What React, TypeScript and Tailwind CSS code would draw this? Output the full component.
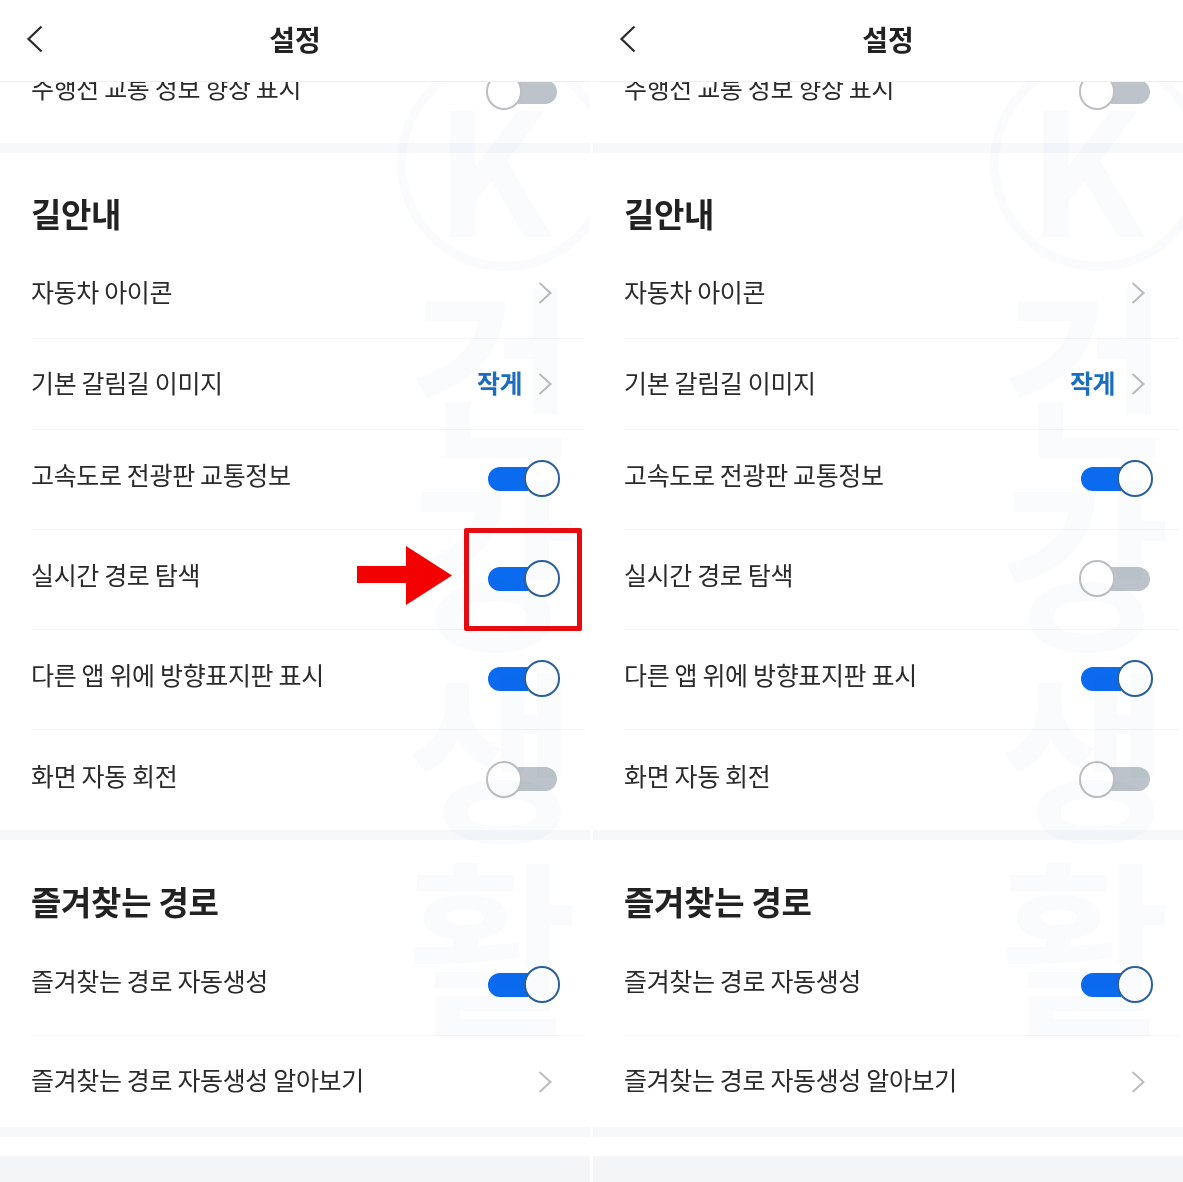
const FONT = "font-['Noto_Sans_CJK_KR','Noto_Sans',sans-serif]";

function Chevron() {
  return (
    <svg width="14" height="22" viewBox="0 0 14 22" fill="none" className="shrink-0">
      <path d="M1.5 1 L12.5 11 L1.5 21" stroke="#bcbcbc" strokeWidth="2" />
    </svg>
  );
}

function Toggle({ on }: { on: boolean }) {
  if (on) {
    return (
      <div className="mb-0.5 -mr-px flex h-[37px] w-[72px] shrink-0 items-center">
        <div className="h-6 w-10 rounded-l-full bg-[#0a6bef]" />
        <div className="-ml-1 h-[37px] w-9 rounded-full border-2 border-[#2b609f] bg-white" />
      </div>
    );
  }
  return (
    <div className="mb-0.5 flex h-[37px] w-[71px] shrink-0 items-center">
      <div className="z-10 -ml-0.5 h-[37px] w-9 shrink-0 rounded-full border-2 border-[#bcbfc2] bg-white" />
      <div className="-ml-1 h-6 w-[39px] rounded-r-full bg-[#bdc3ca]" />
    </div>
  );
}

function Row({
  label,
  height,
  toggle,
  value,
  divider = true,
}: {
  label: string;
  height: string;
  toggle?: boolean;
  value?: string;
  divider?: boolean;
}) {
  const isToggle = toggle !== undefined;
  return (
    <div className={`ml-[31px] mr-[5px] ${height} ${divider ? "border-b border-[#f4f5f7]" : ""}`}>
      <div className="flex h-full items-center justify-between pr-[26px]">
        <span className={`text-[25px] leading-none tracking-[-0.35px] text-[#2a2a2a] ${isToggle ? "pb-2.5" : "pb-1"}`}>{label}</span>
        {isToggle ? (
          <Toggle on={toggle} />
        ) : (
          <div className="flex items-center gap-4 pr-[7px]">
            {value && <span className="pb-1 text-[25px] font-bold leading-none tracking-[-0.5px] text-[#1b6dc1]">{value}</span>}
            <Chevron />
          </div>
        )}
      </div>
    </div>
  );
}

function Band() {
  return <div className="h-2.5 bg-[#f7f8fa]" />;
}

function Heading({ text, height }: { text: string; height: string }) {
  return (
    <div className={`flex items-center px-[31px] ${height}`}>
      <h2 className="text-[33px] font-bold leading-none tracking-[-0.3px] text-[#222]">{text}</h2>
    </div>
  );
}

// faint stamp that sits over the whole screenshot
function Watermark() {
  return (
    <div className="pointer-events-none absolute left-[397px] top-[55px] z-[15] flex w-[190px] flex-col items-center text-[#f9fbfd] mix-blend-multiply">
      <div className="flex h-[216px] w-[216px] shrink-0 items-center justify-center self-start rounded-full border-[9px] border-[#f9fbfd] pr-6 text-[170px] font-bold leading-none">
        K
      </div>
      {["건", "강", "생", "활"].map((c) => (
        <div key={c} className="h-[192px] text-[185px] font-bold leading-none">
          {c}
        </div>
      ))}
    </div>
  );
}

function Panel({ realtime, annotated }: { realtime: boolean; annotated?: boolean }) {
  return (
    <div className="relative h-[1182px] w-[590px] shrink-0 overflow-hidden bg-white">
      <header className="relative z-20 grid h-[82px] grid-cols-[60px_1fr_60px] items-center border-b border-[#eeeff1] bg-white pb-1">
        <svg width="18" height="28" viewBox="0 0 18 28" fill="none" className="ml-[26px]">
          <path d="M15.5 1.5 L2.5 14 L15.5 26.5" stroke="#2a2a2a" strokeWidth="2.2" />
        </svg>
        <h1 className="text-center text-[28px] font-bold leading-none text-[#222]">설정</h1>
      </header>

      <Watermark />

      <main className="relative z-10 -mt-10">
        <Row label="주행선 교통 정보 향상 표시" height="h-[101px]" toggle={false} divider={false} />
        <Band />
        <Heading text="길안내" height="h-[95px] pt-[26px]" />
        <Row label="자동차 아이콘" height="h-[91px]" />
        <Row label="기본 갈림길 이미지" height="h-[91px]" value="작게" />
        <Row label="고속도로 전광판 교통정보" height="h-[100px]" toggle={true} />
        <Row label="실시간 경로 탐색" height="h-[100px]" toggle={realtime} />
        <Row label="다른 앱 위에 방향표지판 표시" height="h-[100px]" toggle={true} />
        <Row label="화면 자동 회전" height="h-[100px]" toggle={false} divider={false} />
        <Band />
        <Heading text="즐겨찾는 경로" height="h-[96px] pt-[26px]" />
        <Row label="즐겨찾는 경로 자동생성" height="h-[100px]" toggle={true} />
        <Row label="즐겨찾는 경로 자동생성 알아보기" height="h-[91px]" divider={false} />
        <Band />
        <div className="mt-[19px] h-10 bg-[#f4f5f7]" />
      </main>

      {annotated && (
        <>
          <svg width="96" height="60" viewBox="0 0 96 60" className="absolute left-[357px] top-[546px] z-30">
            <path d="M0 20 H49 V0 L95 29.5 L49 59 V37 H0 Z" fill="#f30000" />
          </svg>
          <div className="absolute left-[464px] top-[528px] z-30 h-[103px] w-[118px] rounded-[2px] border-[5px] border-[#e60b0f]" />
        </>
      )}
    </div>
  );
}

export default function App() {
  return (
    <div className={`flex h-[1182px] w-[1183px] gap-[3px] overflow-hidden bg-white ${FONT}`}>
      <Panel realtime={true} annotated />
      <Panel realtime={false} />
    </div>
  );
}
